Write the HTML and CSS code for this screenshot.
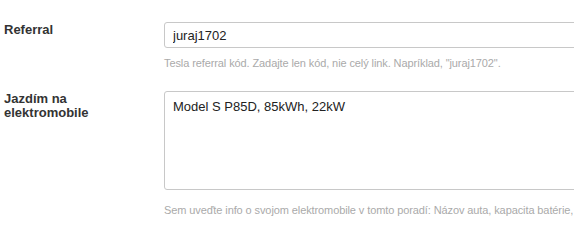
FILE: index.html
```html
<!DOCTYPE html>
<html lang="sk">
<head>
    <meta charset="UTF-8">
    <title>Profil</title>
    <link rel="stylesheet" href="styles.css">
</head>
<body>
<div class="form">
    <div class="row">
        <label class="label" for="referral">Referral</label>
        <div class="field">
            <input class="input" id="referral" type="text" value="juraj1702">
            <p class="help">Tesla referral kód. Zadajte len kód, nie celý link. Napríklad, "juraj1702".</p>
        </div>
    </div>
    <div class="row">
        <label class="label" for="car">Jazdím na elektromobile</label>
        <div class="field">
            <textarea class="input area" id="car">Model S P85D, 85kWh, 22kW</textarea>
            <p class="help">Sem uveďte info o svojom elektromobile v tomto poradí: Názov auta, kapacita batérie,</p>
        </div>
    </div>
</div>
</body>
</html>
```

FILE: styles.css
```css
html,body{
    margin:0;
    padding:0;
    background:#fff;
    overflow:hidden;
}
body{
    font-family:"Liberation Sans",Arial,sans-serif;
    font-size:13px;
    color:#333;
}
.form{
    padding:22px 0 0 4px;
}
.row{
    display:grid;
    grid-template-columns:160px 420px;
    margin-bottom:21px;
}
.label{
    font-weight:bold;
    line-height:14px;
    color:#333;
    padding-top:1px;
    width:110px;
}
.field{
    min-width:0;
}
.input{
    display:block;
    box-sizing:border-box;
    width:440px;
    height:26px;
    margin:0;
    padding:0 8px;
    border:1px solid #c8c8c8;
    border-radius:3px;
    font-family:"Liberation Sans",Arial,sans-serif;
    font-size:13px;
    color:#222;
    background:#fff;
    outline:none;
}
.area{
    height:99px;
    padding:6px 8px;
    line-height:17px;
    resize:none;
}
.help{
    margin:8px 0 0;
    font-size:11px;
    line-height:14px;
    letter-spacing:-0.1px;
    color:#aaa;
    white-space:nowrap;
}
.area + .help{
    margin-top:13px;
}
```
